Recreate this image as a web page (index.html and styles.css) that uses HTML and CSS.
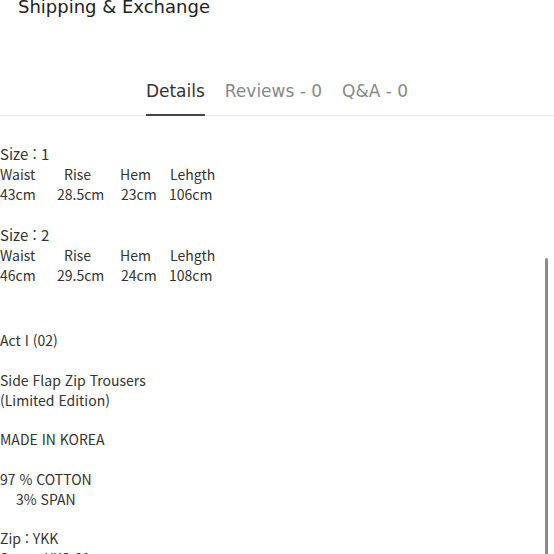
FILE: index.html
```html
<!DOCTYPE html>
<html lang="ko">
<head>
    <meta charset="UTF-8">
    <meta name="viewport" content="width=device-width, initial-scale=1.0">
    <title>Details</title>
    <link rel="stylesheet" href="styles.css">
</head>
<body>
    <div class="shipping">Shipping &amp; Exchange</div>

    <nav class="tabs">
        <div class="tab active">Details</div>
        <div class="tab">Reviews - 0</div>
        <div class="tab">Q&amp;A - 0</div>
    </nav>

    <section class="details">
        <div class="size-block">
            <p>Size : 1</p>
            <div class="size-row head">
                <span class="c1">Waist</span><span class="c2">Rise</span><span class="c3">Hem</span><span>Lehgth</span>
            </div>
            <div class="size-row">
                <span class="v1">43cm</span><span class="v2">28.5cm</span><span class="v3">23cm</span><span>106cm</span>
            </div>
        </div>

        <div class="size-block">
            <p>Size : 2</p>
            <div class="size-row head">
                <span class="c1">Waist</span><span class="c2">Rise</span><span class="c3">Hem</span><span>Lehgth</span>
            </div>
            <div class="size-row">
                <span class="v1">46cm</span><span class="v2">29.5cm</span><span class="v3">24cm</span><span>108cm</span>
            </div>
        </div>

        <div class="info">
            <p>Act I (02)</p>
            <p>Side Flap Zip Trousers<br>(Limited Edition)</p>
            <p>MADE IN KOREA</p>
            <p>97 % COTTON<br><span class="indent">3% SPAN</span></p>
            <p>Zip : YKK<br>Snap : YKS-01</p>
        </div>
    </section>

    <div class="scroll-thumb"></div>
</body>
</html>
```

FILE: styles.css
```css
body {
    margin: 0;
    padding: 0;
    background-color: #fff;
    color: #333;
    overflow: hidden;
}
.shipping {
    font-family: 'DejaVu Sans', sans-serif;
    font-size: 18px;
    color: #222;
    padding-left: 18px;
    margin-top: -5px;
    line-height: 24px;
}
.tabs {
    display: flex;
    justify-content: center;
    gap: 20px;
    margin-top: 53px;
    border-bottom: 1px solid #e3e3e3;
    font-family: 'DejaVu Sans', sans-serif;
    font-size: 17px;
}
.tab {
    color: #888;
    padding-top: 9px;
    padding-bottom: 13px;
    border-bottom: 2px solid transparent;
    margin-bottom: -1px;
}
.tab.active {
    color: #333;
    border-bottom-color: #444;
}
.details {
    font-family: 'Noto Sans CJK KR', 'Noto Sans', sans-serif;
    font-size: 14px;
    line-height: 20px;
    padding-top: 28px;
}
.details p {
    margin: 0;
}
.size-block {
    margin-bottom: 21px;
}
.size-block p {
    font-size: 15px;
}
.size-row {
    display: flex;
}
.head .c1 { width: 64px; }
.head .c2 { width: 56px; }
.head .c3 { width: 50px; }
.size-row .v1 { width: 57px; }
.size-row .v2 { width: 64px; }
.size-row .v3 { width: 48px; }
.info {
    padding-top: 24px;
}
.info p {
    margin-bottom: 19.5px;
}
.indent {
    padding-left: 16px;
}
.scroll-thumb {
    position: fixed;
    right: 6px;
    top: 258px;
    width: 3px;
    height: 300px;
    border-radius: 2px;
    background-color: #8a8a8a;
}
```
